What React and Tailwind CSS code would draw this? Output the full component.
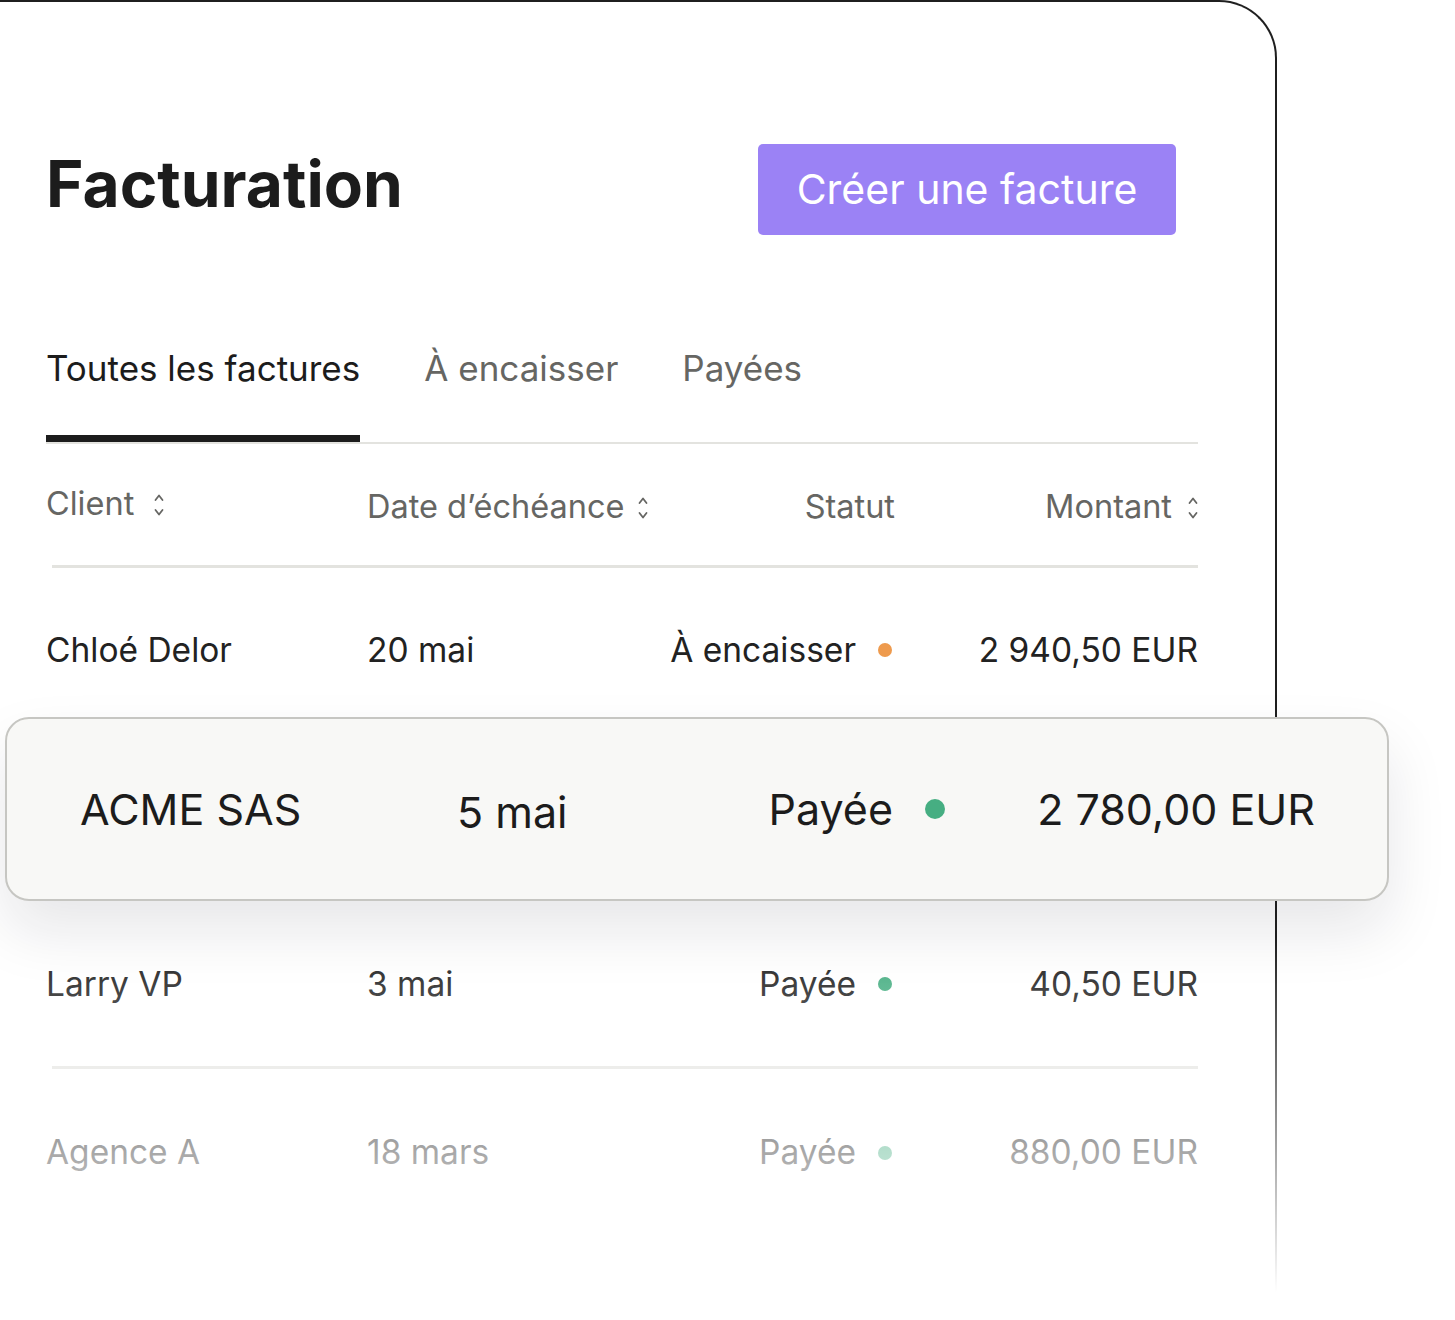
import React from 'react'

const rows = [
  { client: 'Chloé Delor', date: '20 mai', status: 'À encaisser', dot: 'bg-[#ee9a4d]', amount: '2 940,50 EUR' },
  { client: 'ACME SAS', date: '5 mai', status: 'Payée', dot: 'bg-[#46ae82]', amount: '2 780,00 EUR', featured: true },
  { client: 'Larry VP', date: '3 mai', status: 'Payée', dot: 'bg-[#46ae82]', amount: '40,50 EUR' },
  { client: 'Agence A', date: '18 mars', status: 'Payée', dot: 'bg-[#46ae82]', amount: '880,00 EUR', last: true },
]

function SortIcon() {
  return (
    <svg width="10" height="26" viewBox="0 0 10 26" fill="none" stroke="#666663" strokeWidth="1.8" strokeLinecap="round" strokeLinejoin="round">
      <polyline points="1.5,8 5,3.5 8.5,8" />
      <polyline points="1.5,18 5,22.5 8.5,18" />
    </svg>
  )
}

function FeaturedRow({ row }) {
  return (
    <div className="absolute left-[-47px] right-[-191px] top-[-18px] h-[184px] z-20 flex items-center rounded-[24px] border-2 border-[#c6c6c2] bg-[#f8f8f6] pl-[73px] pr-[72px] text-[43px] text-[#1c1c1c] shadow-[0_30px_60px_rgba(20,20,40,0.10)]">
      <div className="w-[377px]">{row.client}</div>
      <div className="flex-1 pt-[6px]">{row.date}</div>
      <div className="flex items-center gap-[32px]">
        <span>{row.status}</span>
        <span className={`h-[20px] w-[20px] rounded-full ${row.dot}`} />
      </div>
      <div className="w-[370px] text-right">{row.amount}</div>
    </div>
  )
}

export default function App() {
  return (
    <div className="relative h-[1320px] w-full overflow-hidden bg-white font-['Inter',sans-serif]">
      <div className="relative h-[1340px] w-[1277px] rounded-tr-[58px] border-t-2 border-r-2 border-[#1f1f1f] pl-[46px] pr-[77px]">
        <div className="flex items-center justify-between pt-[142px] pr-[22px]">
          <h1 className="mb-[12px] text-[64px] font-bold leading-none text-[#1c1c1c]">Facturation</h1>
          <button className="h-[91px] w-[418px] rounded-[5px] bg-[#9b82f5] text-[41px] text-white">Créer une facture</button>
        </div>

        <div className="mt-[112px] flex gap-[64px] border-b-2 border-[#e3e3df] text-[35px] leading-[43px]">
          <div className="border-b-[7px] border-[#1c1c1c] pb-[45px] text-[#1c1c1c]">Toutes les factures</div>
          <div className="pb-[45px] text-[#666663]">À encaisser</div>
          <div className="pb-[45px] text-[#666663]">Payées</div>
        </div>

        <div className="ml-[6px] flex h-[124px] items-center border-b-[3px] border-[#e3e3df] text-[32.5px] text-[#666663]">
          <div className="ml-[-6px] flex w-[321px] items-center gap-[20px]">
            Client <SortIcon />
          </div>
          <div className="flex flex-1 items-center gap-[14px] pt-[6px]">
            Date d’échéance <SortIcon />
          </div>
          <div className="pt-[6px]">Statut</div>
          <div className="flex w-[303px] items-center justify-end gap-[16px] pt-[6px]">
            Montant <SortIcon />
          </div>
        </div>

        {rows.map((row) => (
          <div
            key={row.client}
            className={`relative ml-[6px] flex h-[167px] items-center text-[33.5px] text-[#222222] ${row.last || row.featured ? '' : 'border-b-[3px] border-[#e3e3df]'}`}
          >
            {row.featured ? (
              <FeaturedRow row={row} />
            ) : (
              <>
                <div className="ml-[-6px] w-[321px]">{row.client}</div>
                <div className="flex-1">{row.date}</div>
                <div className="flex items-center gap-[22px]">
                  <span>{row.status}</span>
                  <span className={`h-[14px] w-[14px] rounded-full ${row.dot}`} />
                </div>
                <div className="w-[306px] text-right">{row.amount}</div>
              </>
            )}
          </div>
        ))}

        <div className="pointer-events-none absolute bottom-0 left-0 right-[-4px] top-[935px] z-10 bg-[linear-gradient(to_bottom,rgba(255,255,255,0),#ffffff_355px)]" />
      </div>
    </div>
  )
}
